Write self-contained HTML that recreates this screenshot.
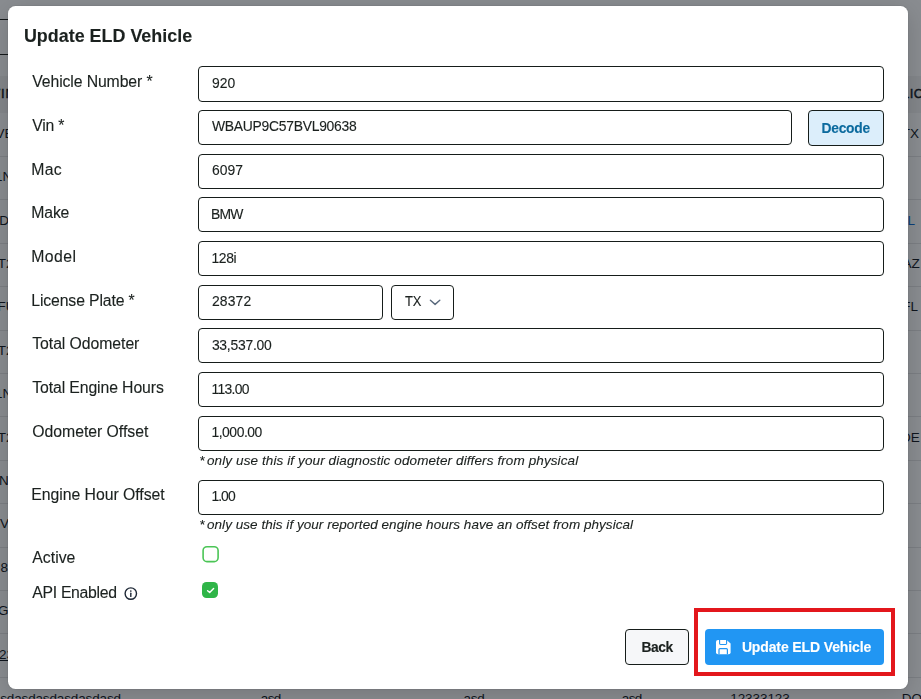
<!DOCTYPE html>
<html lang="en">
<head>
<meta charset="utf-8">
<title>Update ELD Vehicle</title>
<style>
html,body{margin:0;padding:0;}
body{width:921px;height:699px;overflow:hidden;position:relative;background:#8a8d91;font-family:"Liberation Sans",Arial,sans-serif;}
.abs{position:absolute;box-sizing:border-box;}
.t{position:absolute;line-height:1;white-space:pre;}
#bg{position:absolute;left:0;top:0;width:921px;height:699px;overflow:hidden;background:#8a8d91;}
.rl{position:absolute;left:0;width:921px;height:1px;background:#7c7f84;}
#modal{position:absolute;left:8px;top:5.5px;width:900px;height:683.3px;background:#fff;border-radius:7.5px;box-shadow:0 5px 26px rgba(0,0,0,0.17),0 0 0 1px rgba(0,0,0,0.04);}
.inp{position:absolute;box-sizing:border-box;border:1px solid #161d1a;border-radius:4px;background:#fff;}
#form .t{-webkit-text-stroke:0.12px currentColor;}
</style>
</head>
<body>
<div id="bg">
<div class="abs" style="left:0;top:19px;width:8px;height:36px;border-top:1px solid #14181a;border-bottom:1px solid #14181a;"></div>
<div class="abs" style="left:0;top:75.5px;width:921px;height:37px;background:#84878b;"></div>
<div class="rl" style="top:155.90px"></div>
<div class="rl" style="top:199.30px"></div>
<div class="rl" style="top:242.70px"></div>
<div class="rl" style="top:286.10px"></div>
<div class="rl" style="top:329.50px"></div>
<div class="rl" style="top:372.90px"></div>
<div class="rl" style="top:416.30px"></div>
<div class="rl" style="top:459.70px"></div>
<div class="rl" style="top:503.10px"></div>
<div class="rl" style="top:546.50px"></div>
<div class="rl" style="top:589.90px"></div>
<div class="rl" style="top:633.30px"></div>
<div class="rl" style="top:676.70px"></div>
<div class="rl" style="top:720.10px"></div>
<span class="t" style="left:-8.60px;top:87px;font-size:13px;letter-spacing:0.900px;color:#0f151d;-webkit-text-stroke:0.45px currentColor;">VIN</span>
<span class="t" style="left:902.00px;top:87px;font-size:13px;letter-spacing:0.500px;color:#0f151d;-webkit-text-stroke:0.45px currentColor;">LICENSE</span>
<span class="t" style="left:-4.60px;top:127px;font-size:13.5px;color:#0f151d;">VEH</span>
<span class="t" style="left:-5.00px;top:170px;font-size:13.5px;color:#0f151d;">1N</span>
<span class="t" style="left:-0.70px;top:214px;font-size:13.5px;color:#0f151d;">D</span>
<span class="t" style="left:-2.20px;top:257px;font-size:13.5px;color:#0f151d;">T2</span>
<span class="t" style="left:-2.50px;top:300px;font-size:13.5px;color:#0f151d;">FU</span>
<span class="t" style="left:-2.20px;top:344px;font-size:13.5px;color:#0f151d;">T2</span>
<span class="t" style="left:-5.00px;top:387px;font-size:13.5px;color:#0f151d;">1N</span>
<span class="t" style="left:-2.20px;top:431px;font-size:13.5px;color:#0f151d;">T2</span>
<span class="t" style="left:-1.00px;top:474px;font-size:13.5px;color:#0f151d;">N</span>
<span class="t" style="left:0.00px;top:517px;font-size:13.5px;color:#0f151d;">V</span>
<span class="t" style="left:0.50px;top:561px;font-size:13.5px;color:#0f151d;">8</span>
<span class="t" style="left:-2.00px;top:604px;font-size:13.5px;color:#0f151d;">GT</span>
<span class="t" style="left:-8.60px;top:648px;font-size:13.5px;color:#0f151d;text-decoration:underline;">123</span>
<span class="t" style="left:901.80px;top:127px;font-size:13.5px;color:#0f151d;">TX</span>
<span class="t" style="left:907.60px;top:214px;font-size:13.5px;color:#0b3f7a;">L</span>
<span class="t" style="left:902.50px;top:257px;font-size:13.5px;color:#0f151d;">AZ</span>
<span class="t" style="left:902.30px;top:300px;font-size:13.5px;color:#0f151d;">FL</span>
<span class="t" style="left:901.00px;top:431px;font-size:13.5px;color:#0f151d;">DE</span>
<span class="t" style="left:-7.20px;top:692px;font-size:13.5px;letter-spacing:-0.141px;color:#0f151d;">asdasdasdasdasdasd</span>
<span class="t" style="left:260.80px;top:692px;font-size:13.5px;letter-spacing:-0.629px;color:#0f151d;">asd</span>
<span class="t" style="left:463.50px;top:692px;font-size:13.5px;letter-spacing:-0.279px;color:#0f151d;">asd</span>
<span class="t" style="left:621.80px;top:692px;font-size:13.5px;letter-spacing:-0.629px;color:#0f151d;">asd</span>
<span class="t" style="left:730.20px;top:692px;font-size:13.5px;letter-spacing:-0.065px;color:#0f151d;">12333123</span>
<span class="t" style="left:901.70px;top:692px;font-size:13.5px;color:#0f151d;">DOT</span>
</div>
<div id="modal"></div>
<div id="form" style="position:absolute;left:0;top:0;width:921px;height:699px;will-change:transform;">
<div class="inp" style="left:198px;top:66px;width:686px;height:36px"></div>
<div class="inp" style="left:198px;top:110px;width:593.5px;height:35px"></div>
<div class="inp" style="left:198px;top:154px;width:686px;height:35px"></div>
<div class="inp" style="left:198px;top:197px;width:686px;height:35px"></div>
<div class="inp" style="left:198px;top:241px;width:686px;height:35px"></div>
<div class="inp" style="left:198px;top:285px;width:185px;height:35px"></div>
<div class="inp" style="left:198px;top:328px;width:686px;height:35px"></div>
<div class="inp" style="left:198px;top:372px;width:686px;height:35px"></div>
<div class="inp" style="left:198px;top:416px;width:686px;height:35px"></div>
<div class="inp" style="left:198px;top:479.5px;width:686px;height:35px"></div>
<div class="inp" style="left:391px;top:285px;width:62.6px;height:35px"></div>
<svg class="abs" style="left:429px;top:296px" width="13" height="13" viewBox="0 0 13 13"><path d="M1.4 4.3 L6.1 8.4 L10.8 4.3" fill="none" stroke="#5a6a7d" stroke-width="1.4" stroke-linecap="round" stroke-linejoin="round"/></svg>
<div class="inp" style="left:808px;top:110px;width:76px;height:36px;background:#dceefb;"></div>
<svg class="abs" style="left:201px;top:544px" width="20" height="20" viewBox="0 0 20 20"><rect x="2.1" y="2.7" width="15" height="14.9" rx="3.9" fill="#fff" stroke="#4bc556" stroke-width="1.6"/></svg>
<div class="abs" style="left:201.7px;top:581.6px;width:16.5px;height:16.7px;border-radius:4.5px;background:#2fb548;"></div>
<svg class="abs" style="left:201.7px;top:581.6px" width="16.5" height="16.7" viewBox="0 0 16.5 16.7"><path d="M5.6 8.7 L7.7 10.5 L11.6 6.5" fill="none" stroke="#fff" stroke-width="1.45" stroke-linecap="round" stroke-linejoin="round"/></svg>
<svg class="abs" style="left:124px;top:587px" width="15" height="15" viewBox="0 0 15 15"><circle cx="6.8" cy="6.6" r="5.7" fill="none" stroke="#1e2836" stroke-width="1.4"/><path d="M6.8 6.3 V9.4" stroke="#1e2836" stroke-width="1.4" stroke-linecap="round"/><circle cx="6.8" cy="4" r="0.85" fill="#1e2836"/></svg>
<div class="abs" style="left:694px;top:608px;width:201px;height:68px;border:4px solid #e3171c;"></div>
<div class="inp" style="left:625px;top:629px;width:64px;height:36px;background:#f6f7f9;border-radius:4px;"></div>
<div class="abs" style="left:705px;top:629px;width:179px;height:36px;background:#2196f3;border-radius:4px;"></div>
<svg class="abs" style="left:715px;top:639px" width="17" height="17" viewBox="0 0 17 17">
<path d="M3 1 H11.6 L15.6 4.6 V13.2 Q15.6 15.2 13.6 15.2 H3 Q1 15.2 1 13.2 V3 Q1 1 3 1 Z" fill="#fff"/>
<path d="M4.6 1 V4.6 Q4.6 5.5 5.5 5.5 H10.7 Q11.6 5.5 11.6 4.6 V1" fill="none" stroke="#2196f3" stroke-width="1.1"/>
<path d="M4 15.2 V10.6 Q4 9.6 5 9.6 H11.4 Q12.4 9.6 12.4 10.6 V15.2" fill="none" stroke="#2196f3" stroke-width="1.2"/>
</svg>
<span class="t" style="left:23.90px;top:28px;font-size:17.9px;letter-spacing:0.013px;color:#1b211f;font-weight:700;">Update ELD Vehicle</span>
<span class="t" style="left:32.30px;top:74px;font-size:15.8px;letter-spacing:-0.120px;color:#1b211f;">Vehicle Number *</span>
<span class="t" style="left:32.30px;top:118px;font-size:15.8px;letter-spacing:-0.234px;color:#1b211f;">Vin *</span>
<span class="t" style="left:31.30px;top:162px;font-size:15.8px;letter-spacing:0.228px;color:#1b211f;">Mac</span>
<span class="t" style="left:31.30px;top:205px;font-size:15.8px;letter-spacing:-0.181px;color:#1b211f;">Make</span>
<span class="t" style="left:31.30px;top:249px;font-size:15.8px;letter-spacing:0.396px;color:#1b211f;">Model</span>
<span class="t" style="left:31.30px;top:293px;font-size:15.8px;letter-spacing:-0.138px;color:#1b211f;">License Plate *</span>
<span class="t" style="left:32.30px;top:336px;font-size:15.8px;letter-spacing:-0.072px;color:#1b211f;">Total Odometer</span>
<span class="t" style="left:32.30px;top:380px;font-size:15.8px;letter-spacing:-0.116px;color:#1b211f;">Total Engine Hours</span>
<span class="t" style="left:32.30px;top:424px;font-size:15.8px;letter-spacing:-0.035px;color:#1b211f;">Odometer Offset</span>
<span class="t" style="left:31.30px;top:487px;font-size:15.8px;letter-spacing:-0.039px;color:#1b211f;">Engine Hour Offset</span>
<span class="t" style="left:32.30px;top:550px;font-size:15.8px;letter-spacing:0.014px;color:#1b211f;">Active</span>
<span class="t" style="left:32.30px;top:585px;font-size:15.8px;letter-spacing:-0.314px;color:#1b211f;">API Enabled</span>
<span class="t" style="left:211.90px;top:77px;font-size:13.9px;letter-spacing:0.025px;color:#1b211f;">920</span>
<span class="t" style="left:211.90px;top:120px;font-size:13.9px;letter-spacing:-0.263px;color:#1b211f;">WBAUP9C57BVL90638</span>
<span class="t" style="left:211.90px;top:164px;font-size:13.9px;letter-spacing:0.075px;color:#1b211f;">6097</span>
<span class="t" style="left:211.00px;top:208px;font-size:13.9px;letter-spacing:-0.818px;color:#1b211f;">BMW</span>
<span class="t" style="left:211.50px;top:252px;font-size:13.9px;letter-spacing:-0.392px;color:#1b211f;">128i</span>
<span class="t" style="left:211.90px;top:295px;font-size:13.9px;letter-spacing:0.175px;color:#1b211f;">28372</span>
<span class="t" style="left:211.90px;top:339px;font-size:13.9px;letter-spacing:-0.246px;color:#1b211f;">33,537.00</span>
<span class="t" style="left:211.40px;top:383px;font-size:13.9px;letter-spacing:-0.686px;color:#1b211f;">113.00</span>
<span class="t" style="left:211.40px;top:426px;font-size:13.9px;letter-spacing:-0.449px;color:#1b211f;">1,000.00</span>
<span class="t" style="left:211.40px;top:490px;font-size:13.9px;letter-spacing:-0.937px;color:#1b211f;">1.00</span>
<span class="t" style="left:405.20px;top:295px;font-size:13.9px;letter-spacing:-0.300px;color:#1b211f;transform:scaleX(0.935);transform-origin:0.00px 50%;">TX</span>
<span class="t" style="left:199.20px;top:454px;font-size:13.5px;color:#1b211f;font-style:italic;">*</span>
<span class="t" style="left:207.00px;top:454px;font-size:13.5px;letter-spacing:0.105px;color:#1b211f;font-style:italic;">only use this if your diagnostic odometer differs from physical</span>
<span class="t" style="left:199.20px;top:518px;font-size:13.5px;color:#1b211f;font-style:italic;">*</span>
<span class="t" style="left:207.00px;top:518px;font-size:13.5px;letter-spacing:0.039px;color:#1b211f;font-style:italic;">only use this if your reported engine hours have an offset from physical</span>
<span class="t" style="left:821.50px;top:122px;font-size:13.8px;letter-spacing:-0.253px;color:#0b6a9e;font-weight:700;">Decode</span>
<span class="t" style="left:641.60px;top:641px;font-size:13.8px;letter-spacing:-0.503px;color:#1b211f;font-weight:700;">Back</span>
<span class="t" style="left:741.90px;top:640px;font-size:14px;letter-spacing:-0.129px;color:#ffffff;font-weight:700;">Update ELD Vehicle</span>
</div>
</body>
</html>
